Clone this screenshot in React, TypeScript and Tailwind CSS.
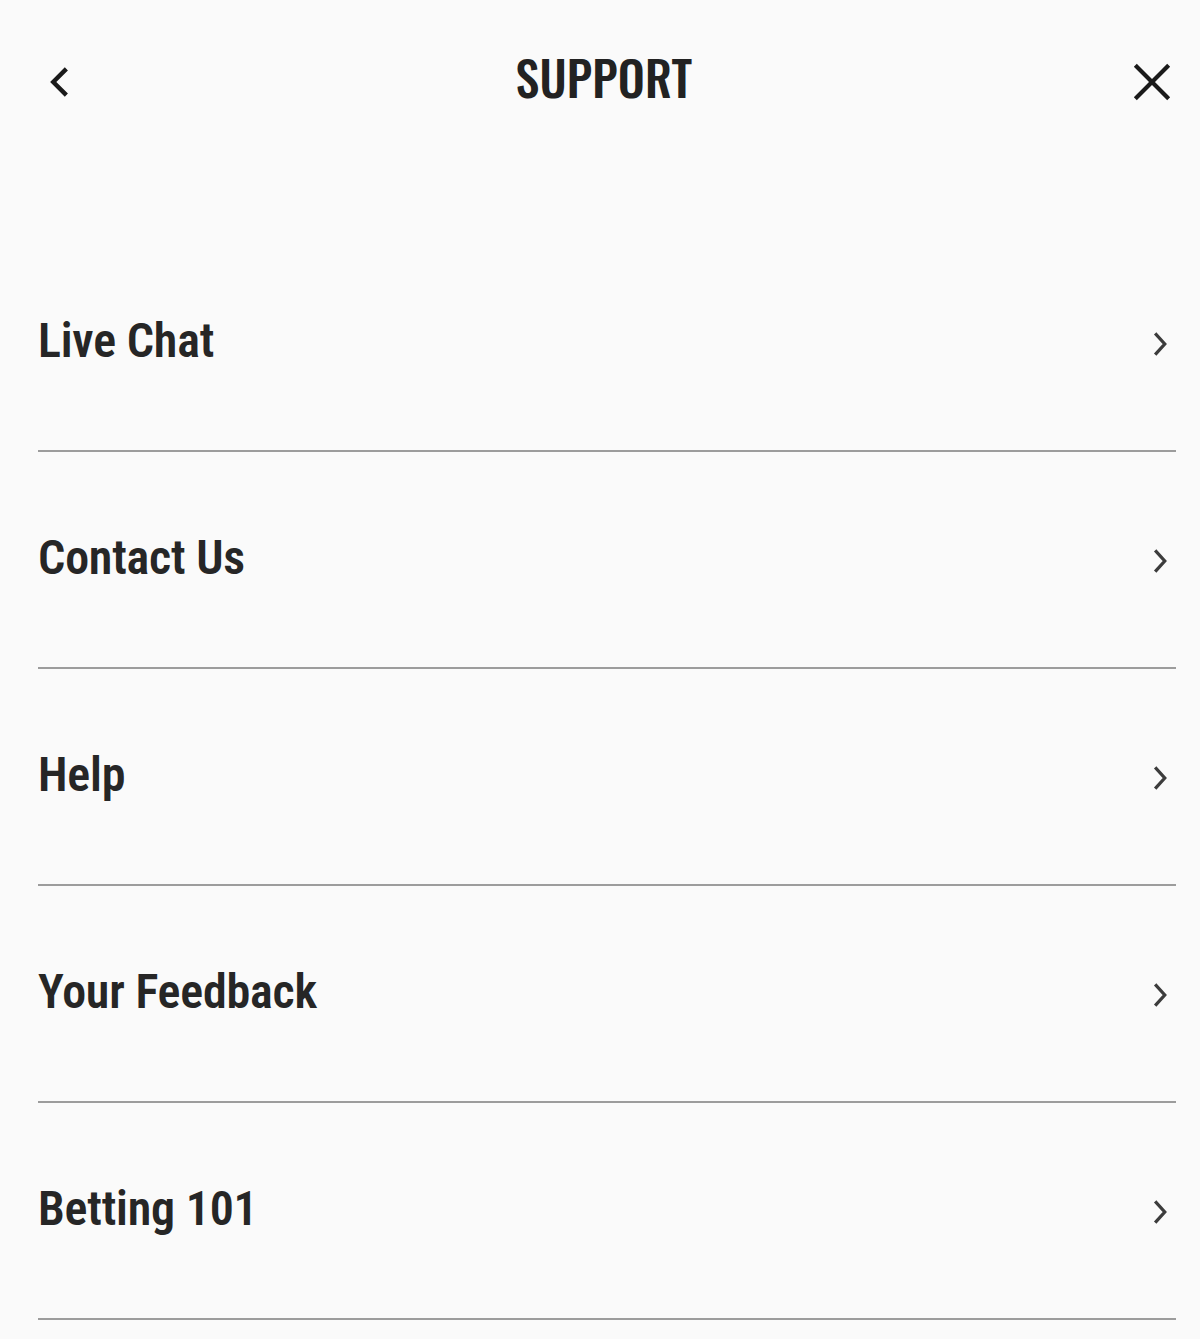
const items = ['Live Chat', 'Contact Us', 'Help', 'Your Feedback', 'Betting 101'];

function Chevron({ dir, className }: { dir: 'left' | 'right'; className?: string }) {
  return (
    <svg viewBox="0 0 20 30" className={className} fill="none" stroke="currentColor" strokeLinecap="square">
      {dir === 'left' ? <polyline points="16,4 5,15 16,26" strokeWidth={4.2} /> : <polyline points="5,4 15,15 5,26" strokeWidth={3.8} />}
    </svg>
  );
}

export default function App() {
  return (
    <div className="min-h-[1339px] bg-[#fafafa] text-[#222]" style={{ fontFamily: '"Roboto Condensed", Roboto, sans-serif' }}>
      {/* header */}
      <div className="flex h-[164px] items-center justify-between pl-[48px] pr-[28px]">
        <button className="flex h-[40px] w-[24px] items-center text-[#1a1a1a]">
          <Chevron dir="left" className="h-[32px] w-[21px]" />
        </button>
        <h1
          className="mt-[-10px] ml-[4px] text-[48px] font-medium uppercase leading-none tracking-[0.2px] text-[#222]"
          style={{ fontFamily: 'Oswald, "Roboto Condensed", sans-serif' }}
        >
          Support
        </h1>
        <button className="flex h-[40px] w-[40px] items-center justify-center text-[#1a1a1a]">
          <svg viewBox="0 0 40 40" className="h-[38px] w-[38px]" stroke="currentColor" strokeWidth={4.4} strokeLinecap="square">
            <line x1="4" y1="4" x2="36" y2="36" />
            <line x1="36" y1="4" x2="4" y2="36" />
          </svg>
        </button>
      </div>

      {/* list */}
      <ul className="ml-[38px] mr-[24px] pt-[71px]">
        {items.map((label) => (
          <li key={label} className="flex h-[217px] items-center justify-between border-b-2 border-[#9c9c9c]">
            <span className="mt-[-4px] text-[48px] font-semibold leading-none tracking-[-0.2px] text-[#262626]">{label}</span>
            <Chevron dir="right" className="mr-[7px] mt-[2px] h-[26px] w-[17px] text-[#3c3c3c]" />
          </li>
        ))}
      </ul>
    </div>
  );
}
